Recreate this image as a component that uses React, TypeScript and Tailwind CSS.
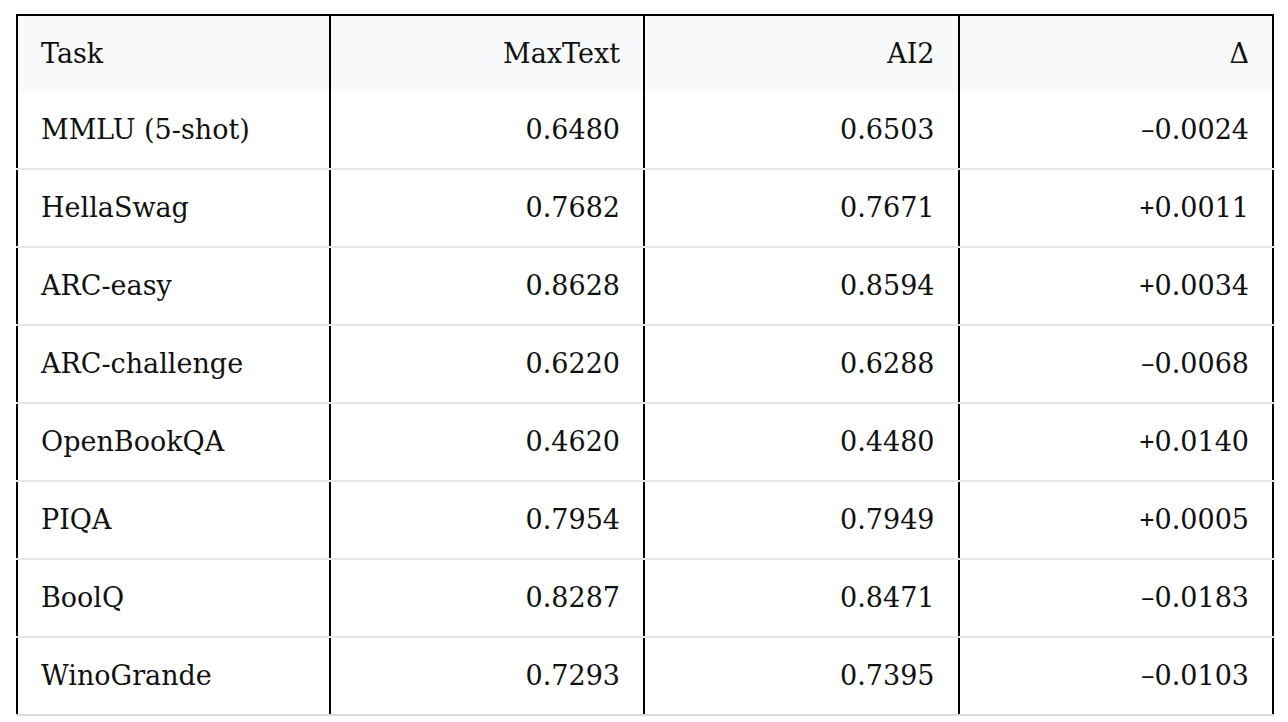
import React from "react";

const rows: [string, string, string, string][] = [
  ["MMLU (5-shot)", "0.6480", "0.6503", "\u20130.0024"],
  ["HellaSwag", "0.7682", "0.7671", "+0.0011"],
  ["ARC-easy", "0.8628", "0.8594", "+0.0034"],
  ["ARC-challenge", "0.6220", "0.6288", "\u20130.0068"],
  ["OpenBookQA", "0.4620", "0.4480", "+0.0140"],
  ["PIQA", "0.7954", "0.7949", "+0.0005"],
  ["BoolQ", "0.8287", "0.8471", "\u20130.0183"],
  ["WinoGrande", "0.7293", "0.7395", "\u20130.0103"],
];

function Delta({ v }: { v: string }) {
  const sign = v.charAt(0);
  const rest = v.slice(1);
  if (sign === "+") {
    return (
      <span>
        <span className="font-bold" style={{ fontFamily: '"Liberation Serif", serif' }}>
          +
        </span>
        {rest}
      </span>
    );
  }
  return <span>{v}</span>;
}

export default function App() {
  return (
    <div
      className="w-[1288px] h-[722px] bg-white overflow-hidden pt-[14px] pl-[16px]"
      style={{ fontFamily: '"DejaVu Serif", "Liberation Serif", serif' }}
    >
      <div className="w-[1258px] border-t-2 border-black text-[27px] leading-[40px] text-[#111111]">
        <div className="grid grid-cols-4 bg-[#f8f9fa] h-[76px]">
          <div className="border-l-2 border-r-2 border-black flex items-center px-[23px]">Task</div>
          <div className="border-r-2 border-black flex items-center justify-end px-[23px]">MaxText</div>
          <div className="border-r-2 border-black flex items-center justify-end px-[23px]">AI2</div>
          <div className="border-r-2 border-black flex items-center justify-end px-[23px]">Δ</div>
        </div>
        {rows.map((r, i) => (
          <div
            key={i}
            className={
              "grid grid-cols-4 h-[78px] border-b-2 " +
              (i === rows.length - 1 ? "border-[#d9d9d9]" : "border-[#e6e6e6]")
            }
          >
            <div className="border-l-2 border-r-2 border-black flex items-center px-[23px]">{r[0]}</div>
            <div className="border-r-2 border-black flex items-center justify-end px-[23px]">{r[1]}</div>
            <div className="border-r-2 border-black flex items-center justify-end px-[23px]">{r[2]}</div>
            <div className="border-r-2 border-black flex items-center justify-end px-[23px]">
              <Delta v={r[3]} />
            </div>
          </div>
        ))}
      </div>
    </div>
  );
}
